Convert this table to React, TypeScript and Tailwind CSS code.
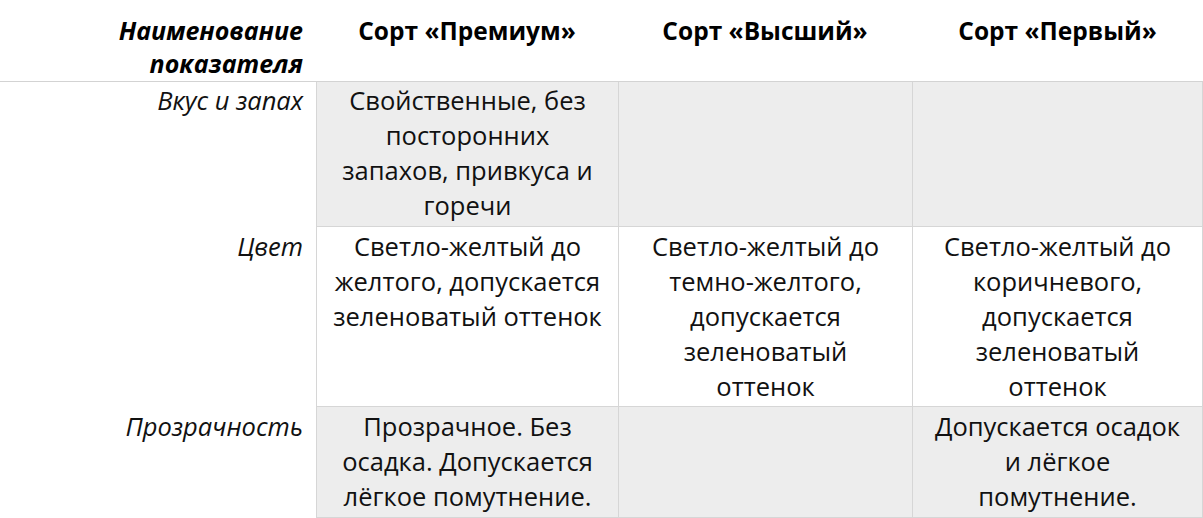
import React from "react";

const font = { fontFamily: '"Open Sans", "Noto Sans", sans-serif' };

function Lines({ lines }: { lines: string[] }) {
  return (
    <>
      {lines.map((l, i) => (
        <span key={i} className="block whitespace-nowrap">
          {l}
        </span>
      ))}
    </>
  );
}

export default function App() {
  const headCls = "h-[82px] border-b border-[#d3d3d3] pt-[14px] leading-[33px] font-bold text-black";
  const labelCls = "pr-[13px] pt-[1px] text-right italic text-[25.5px] leading-[35px] text-[#111]";
  const cellBase = "border-l border-b border-[#d6d6d6] pt-[1px] text-center text-[25.5px] leading-[35px] text-[#111]";
  const gray = "bg-[#ededed]";
  return (
    <div className="w-[1203px] h-[518px] bg-white overflow-hidden" style={font}>
      <div className="grid grid-cols-[316px_302px_294px_291px] grid-rows-[82px_145px_180px_111px]">
        {/* header */}
        <div className={`${headCls} pr-[13px] text-right italic text-[25px]`}>
          <Lines lines={["Наименование", "показателя"]} />
        </div>
        <div className={`${headCls} text-center text-[24.5px]`}>Сорт «Премиум»</div>
        <div className={`${headCls} text-center text-[24.5px]`}>Сорт «Высший»</div>
        <div className={`${headCls} text-center text-[24.5px]`}>Сорт «Первый»</div>

        {/* row 1 */}
        <div className={labelCls}>Вкус и запах</div>
        <div className={`${cellBase} ${gray}`}>
          <Lines lines={["Свойственные, без", "посторонних", "запахов, привкуса и", "горечи"]} />
        </div>
        <div className={`${cellBase} ${gray}`}></div>
        <div className={`${cellBase} ${gray} border-r`}></div>

        {/* row 2 */}
        <div className={`${labelCls} pt-[2px]`}>Цвет</div>
        <div className={`${cellBase} pt-[2px]`}>
          <Lines lines={["Светло-желтый до", "желтого, допускается", "зеленоватый оттенок"]} />
        </div>
        <div className={`${cellBase} pt-[2px]`}>
          <Lines lines={["Светло-желтый до", "темно-желтого,", "допускается", "зеленоватый", "оттенок"]} />
        </div>
        <div className={`${cellBase} pt-[2px] border-r`}>
          <Lines lines={["Светло-желтый до", "коричневого,", "допускается", "зеленоватый", "оттенок"]} />
        </div>

        {/* row 3 */}
        <div className={`${labelCls} pt-[2px]`}>Прозрачность</div>
        <div className={`${cellBase} ${gray} pt-[2px]`}>
          <Lines lines={["Прозрачное. Без", "осадка. Допускается", "лёгкое помутнение."]} />
        </div>
        <div className={`${cellBase} ${gray}`}></div>
        <div className={`${cellBase} ${gray} pt-[2px] border-r`}>
          <Lines lines={["Допускается осадок", "и лёгкое", "помутнение."]} />
        </div>
      </div>
    </div>
  );
}
